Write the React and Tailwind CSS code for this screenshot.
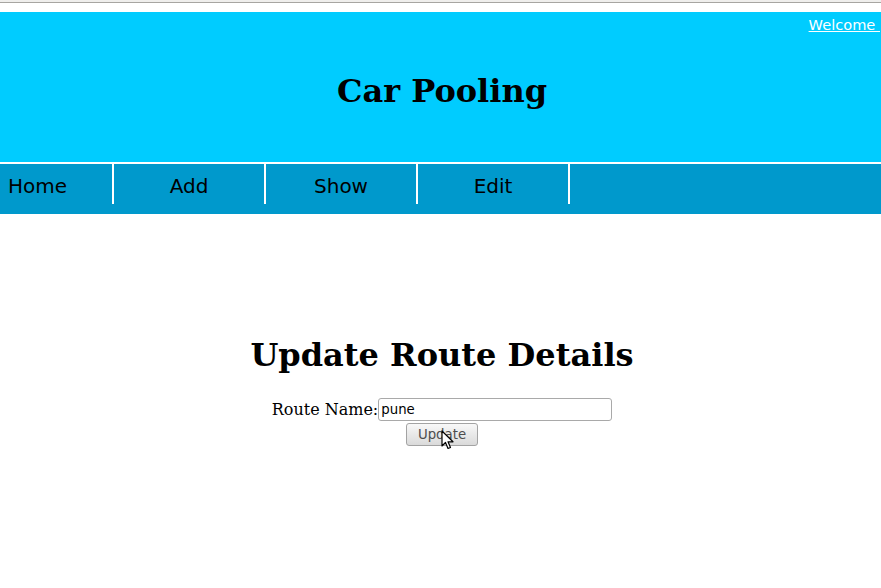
import React from "react";

const sans = { fontFamily: '"DejaVu Sans", Verdana, sans-serif' };

export default function App() {
  return (
    <div className="w-[881px] h-[588px] overflow-hidden bg-white relative" style={{ fontFamily: '"DejaVu Serif", serif' }}>
      <div className="h-[2px] bg-[#efeeec]" />
      <div className="h-px bg-[#a7a5a1]" />
      <div className="h-[9px] bg-white" />
      <header className="h-[150px] bg-[#00ccff] overflow-hidden">
        <div className="flex justify-end pt-[4px] h-[21px]">
          <a href="#" className="text-white underline text-[14.6px] leading-[17px] whitespace-nowrap mr-[1px]" style={sans}>
            Welcome&nbsp;
          </a>
        </div>
        <h1 className="text-center font-bold text-[32px] leading-[37px] text-black mt-[40px] pl-[3px]">Car Pooling</h1>
      </header>
      <div className="h-[2px] bg-white" />
      <nav className="h-[50px] bg-[#0099cc]">
        <ul className="flex h-[40px] text-[20px] text-black" style={sans}>
          <li className="w-[114px] border-r-2 border-white pl-[8px] pt-[4px] leading-[36px]">Home</li>
          <li className="w-[152px] border-r-2 border-white text-center pt-[4px] leading-[36px]">Add</li>
          <li className="w-[152px] border-r-2 border-white text-center pt-[4px] leading-[36px]">Show</li>
          <li className="w-[152px] border-r-2 border-white text-center pt-[4px] leading-[36px]">Edit</li>
        </ul>
      </nav>
      <main className="text-center pl-[3px]">
        <h1 className="font-bold text-[32px] leading-[37px] text-black mt-[123px]">Update Route Details</h1>
        <div className="mt-[23px] flex justify-center items-center h-[25px]">
          <label className="text-[16px] text-black leading-[19px]">Route Name:</label>
          <input
            type="text"
            defaultValue="pune"
            className="w-[234px] h-[23px] border border-[#a9a9a9] rounded-[3px] px-[2px] text-[13.3px] text-black bg-white outline-none"
            style={sans}
          />
        </div>
        <div className="flex justify-center mt-px">
          <button
            className="w-[72px] h-[23px] border border-[#a3a3a3] rounded-[3px] bg-gradient-to-b from-[#f8f8f8] to-[#dadada] text-[13.3px] text-[#4d4d4d] leading-[20px]"
            style={sans}
          >
            Update
          </button>
        </div>
      </main>
      <svg className="absolute left-[441px] top-[430px]" width="14" height="21" viewBox="0 0 14 21">
        <path d="M1 1 L1 16 L4.5 12.5 L7 18.5 L9.5 17.5 L7 11.8 L12 11.8 Z" fill="white" stroke="black" strokeWidth="1.2" strokeLinejoin="round" />
      </svg>
    </div>
  );
}
